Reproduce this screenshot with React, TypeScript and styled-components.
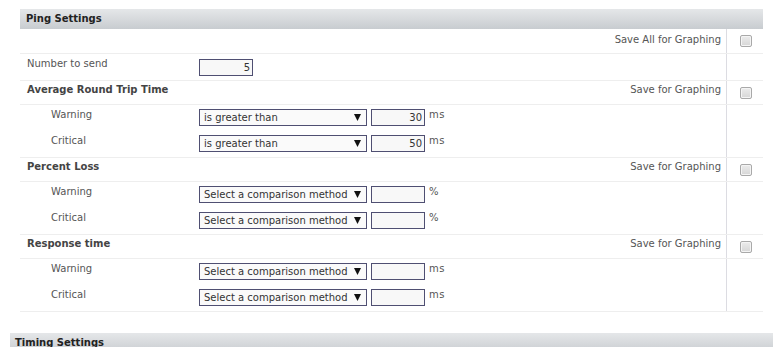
import React from 'react';
import styled, { createGlobalStyle } from 'styled-components';

const GlobalStyle = createGlobalStyle`
  body {
    margin: 0;
    background: #ffffff;
    font-family: "DejaVu Sans", Verdana, sans-serif;
    font-size: 10px;
    color: #555;
  }
`;

const Page = styled.div`
  padding-top: 9px;
  display: flex;
  flex-direction: column;
  gap: 21px;
`;

const Section = styled.section<{ $inset: number }>`
  margin: 0 ${({ $inset }) => $inset}px;
`;

const SectionHeader = styled.div<{ $pad: number }>`
  height: 20px;
  line-height: 20px;
  padding-left: ${({ $pad }) => $pad}px;
  background: linear-gradient(#e5e7e9, #c8ccd0);
  font-weight: 700;
  color: #222;
`;

const Row = styled.div<{ $line?: boolean }>`
  display: grid;
  grid-template-columns: 1fr 37px;
  border-bottom: ${({ $line }) => ($line ? '1px solid #eeeeee' : 'none')};
`;

const MainCell = styled.div<{ $height: number }>`
  display: flex;
  align-items: flex-start;
  height: ${({ $height }) => $height}px;
`;

const Label = styled.div<{ $indent?: boolean; $bold?: boolean; $top: number }>`
  width: ${({ $indent }) => ($indent ? 148 : 172)}px;
  padding-left: ${({ $indent }) => ($indent ? 31 : 7)}px;
  padding-top: ${({ $top }) => $top}px;
  line-height: 12px;
  font-weight: ${({ $bold }) => ($bold ? 700 : 400)};
  color: ${({ $bold }) => ($bold ? '#444' : '#555')};
  flex-shrink: 0;
`;

const Controls = styled.div<{ $top: number }>`
  display: flex;
  align-items: flex-start;
  gap: 4px;
  padding-top: ${({ $top }) => $top}px;
`;

const SaveText = styled.div<{ $top: number }>`
  margin-left: auto;
  padding-right: 5px;
  padding-top: ${({ $top }) => $top}px;
  line-height: 12px;
  color: #555;
`;

const CheckCell = styled.div`
  border-left: 1px solid #dcdce2;
  display: flex;
  align-items: center;
  padding-left: 13px;
`;

const Checkbox = styled.input.attrs({ type: 'checkbox' })`
  appearance: none;
  margin: 0;
  width: 12px;
  height: 12px;
  border: 1px solid #a9a9a9;
  border-radius: 2px;
  background: linear-gradient(#ececec, #d6d6d6);
  box-shadow: inset 0 0 0 1px #f4f4f4;
`;

const TextInput = styled.input`
  box-sizing: border-box;
  width: 54px;
  height: 17px;
  margin: 0;
  padding: 0 2px;
  border: 1px solid #4f4f72;
  background: #f8f8f8;
  font-family: inherit;
  font-size: 10px;
  color: #333;
  text-align: right;
  outline: none;
`;

const SelectWrap = styled.div`
  position: relative;
  width: 168px;
  height: 17px;
`;

const Select = styled.select`
  box-sizing: border-box;
  appearance: none;
  width: 100%;
  height: 100%;
  margin: 0;
  padding: 0 0 0 4px;
  border: 1px solid #4f4f72;
  border-radius: 0;
  background: #fafafa;
  font-family: inherit;
  font-size: 10px;
  color: #333;
  outline: none;
`;

const Arrow = styled.svg`
  position: absolute;
  right: 6px;
  top: 5px;
  pointer-events: none;
`;

const Unit = styled.span`
  line-height: 12px;
  color: #555;
  letter-spacing: 0.5px;
`;

function Dropdown({ value }: { value: string }) {
  return (
    <SelectWrap>
      <Select defaultValue={value}>
        <option>{value}</option>
      </Select>
      <Arrow width="7" height="7" viewBox="0 0 7 7">
        <polygon points="0,0 7,0 3.5,7" fill="#111" />
      </Arrow>
    </SelectWrap>
  );
}

type Threshold = { label: string; method: string; value: string; unit: string };

type Group = { title: string; rows: Threshold[] };

const placeholder = 'Select a comparison method';

const groups: Group[] = [
  {
    title: 'Average Round Trip Time',
    rows: [
      { label: 'Warning', method: 'is greater than', value: '30', unit: 'ms' },
      { label: 'Critical', method: 'is greater than', value: '50', unit: 'ms' },
    ],
  },
  {
    title: 'Percent Loss',
    rows: [
      { label: 'Warning', method: placeholder, value: '', unit: '%' },
      { label: 'Critical', method: placeholder, value: '', unit: '%' },
    ],
  },
  {
    title: 'Response time',
    rows: [
      { label: 'Warning', method: placeholder, value: '', unit: 'ms' },
      { label: 'Critical', method: placeholder, value: '', unit: 'ms' },
    ],
  },
];

export default function App() {
  return (
    <>
      <GlobalStyle />
      <Page>
        <Section $inset={20}>
          <SectionHeader $pad={6}>Ping Settings</SectionHeader>

          <Row $line>
            <MainCell $height={24}>
              <SaveText $top={5}>Save All for Graphing</SaveText>
            </MainCell>
            <CheckCell>
              <Checkbox />
            </CheckCell>
          </Row>

          <Row $line>
            <MainCell $height={26}>
              <Label $top={4}>Number to send</Label>
              <Controls $top={5}>
                <TextInput defaultValue="5" />
              </Controls>
            </MainCell>
            <CheckCell />
          </Row>

          {groups.map((g) => (
            <React.Fragment key={g.title}>
              <Row $line>
                <MainCell $height={23}>
                  <Label $bold $top={3}>
                    {g.title}
                  </Label>
                  <SaveText $top={3}>Save for Graphing</SaveText>
                </MainCell>
                <CheckCell>
                  <Checkbox />
                </CheckCell>
              </Row>
              {g.rows.map((r, i) => (
                <Row key={r.label} $line={i === g.rows.length - 1}>
                  <MainCell $height={26}>
                    <Label $indent $top={4}>
                      {r.label}
                    </Label>
                    <Controls $top={4}>
                      <Dropdown value={r.method} />
                      <TextInput defaultValue={r.value} />
                      <Unit>{r.unit}</Unit>
                    </Controls>
                  </MainCell>
                  <CheckCell />
                </Row>
              ))}
            </React.Fragment>
          ))}
        </Section>

        <Section $inset={10}>
          <SectionHeader $pad={5}>Timing Settings</SectionHeader>
        </Section>
      </Page>
    </>
  );
}
